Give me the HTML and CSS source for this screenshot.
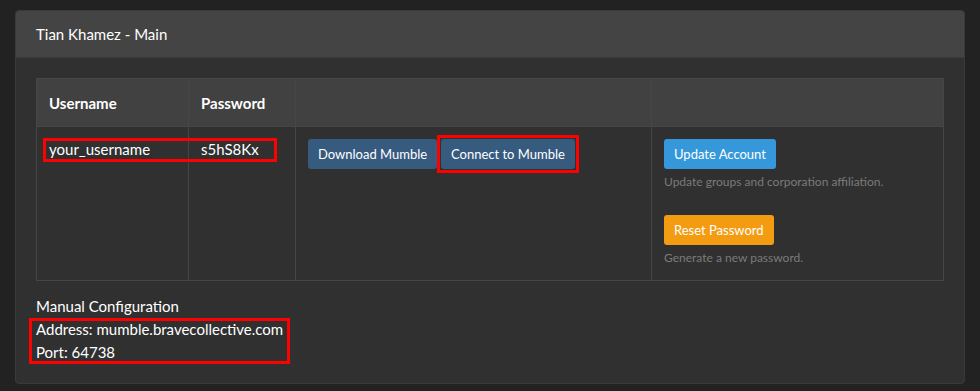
FILE: index.html
```html
<!DOCTYPE html>
<html lang="en">
<head>
    <meta charset="UTF-8">
    <title>Mumble Account</title>
    <link rel="stylesheet" href="styles.css">
</head>
<body>
    <div class="panel">
        <div class="panel-heading">Tian Khamez - Main</div>
        <div class="panel-body">
            <table class="account-table">
                <colgroup>
                    <col class="col-user">
                    <col class="col-pass">
                    <col class="col-connect">
                    <col class="col-actions">
                </colgroup>
                <thead>
                    <tr>
                        <th>Username</th>
                        <th>Password</th>
                        <th></th>
                        <th></th>
                    </tr>
                </thead>
                <tbody>
                    <tr>
                        <td class="user-cell">
                            your_username
                            <span class="mark mark-creds"></span>
                        </td>
                        <td>s5hS8Kx</td>
                        <td>
                            <a class="btn btn-primary">Download Mumble</a>
                            <a class="btn btn-primary btn-marked">Connect to Mumble</a>
                        </td>
                        <td>
                            <div class="action">
                                <a class="btn btn-info">Update Account</a>
                                <p class="help">Update groups and corporation affiliation.</p>
                            </div>
                            <div class="action">
                                <a class="btn btn-warning">Reset Password</a>
                                <p class="help">Generate a new password.</p>
                            </div>
                        </td>
                    </tr>
                </tbody>
            </table>

            <div class="manual">
                <div class="manual-title">Manual Configuration</div>
                <div class="manual-lines">
                    <div>Address: mumble.bravecollective.com</div>
                    <div>Port: 64738</div>
                </div>
            </div>
        </div>
    </div>
</body>
</html>
```

FILE: styles.css
```css
body {
    margin: 0;
    padding: 10px 15px 6px;
    background-color: #222222;
    color: #ffffff;
    font-family: Lato, "Open Sans", sans-serif;
    font-size: 15px;
    line-height: 21px;
}

.panel {
    background: #303030;
    border: 1px solid #3a3a3a;
    border-radius: 4px;
    overflow: hidden;
}

.panel-heading {
    background: #444444;
    border-bottom: 1px solid #3c3c3c;
    padding: 13px 20px 12px;
}

.panel-body {
    padding: 20px 20px 19px;
}

.account-table {
    width: 100%;
    border-collapse: collapse;
}

.col-user { width: 152px; }
.col-pass { width: 107px; }
.col-connect { width: 356px; }

.account-table th,
.account-table td {
    border: 1px solid #464646;
    text-align: left;
    vertical-align: top;
}

.account-table th {
    background: #414141;
    font-weight: bold;
    padding: 13px 12px 12px;
    line-height: 22px;
}

.account-table td {
    padding: 12px 12px 14px;
}

.user-cell {
    position: relative;
}

.btn {
    display: inline-block;
    font-size: 13px;
    line-height: 20px;
    padding: 5px 10px;
    border-radius: 3px;
    color: #ffffff;
    cursor: pointer;
}

.btn-primary { background: #375a7f; }
.btn-info { background: #3498db; }
.btn-warning { background: #f39c12; }

.btn-marked {
    position: relative;
}

.action + .action {
    margin-top: 25px;
}

.help {
    margin: 4px 0 0;
    font-size: 12px;
    line-height: 17px;
    color: #7b7b7b;
}

.manual {
    margin-top: 14px;
    line-height: 23px;
}

.manual-lines {
    position: relative;
}

/* red annotation boxes */
.mark,
.btn-marked::after,
.manual-lines::after {
    position: absolute;
    border: 3px solid #ff0000;
    pointer-events: none;
}

.mark-creds {
    left: 6px;
    top: 11px;
    width: 228px;
    height: 18px;
}

.btn-marked::after {
    content: "";
    top: -4px;
    bottom: -4px;
    left: -4px;
    right: -4px;
}

.manual-lines::after {
    content: "";
    left: -7px;
    width: 255px;
    top: 0;
    bottom: 0;
}
```
